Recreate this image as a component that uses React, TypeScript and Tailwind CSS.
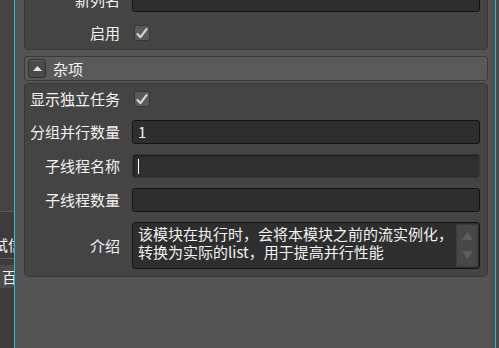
import type { ReactNode } from "react";

const font = "font-['Noto_Sans_CJK_SC','Noto_Sans',sans-serif]";

function Check() {
  return (
    <div className="ml-[2px] flex h-[16px] w-[16px] items-center justify-center rounded-[2px] border border-[#383838] bg-[#595959]">
      <svg width="12" height="11" viewBox="0 0 12 11">
        <path d="M1.5 6 L4.5 9.2 L10.5 1.2" fill="none" stroke="#d4d4d4" strokeWidth="2.2" strokeLinecap="round" strokeLinejoin="round" />
      </svg>
    </div>
  );
}

function Row({ label, children, className = "" }: { label: string; children: ReactNode; className?: string }) {
  return (
    <div className={`flex items-center ${className}`}>
      <div className="w-[95px] shrink-0 text-right leading-[18px]">{label}</div>
      <div className="ml-[12px] flex flex-1 items-center">{children}</div>
    </div>
  );
}

function Field({ value, focused }: { value?: string; focused?: boolean }) {
  return (
    <div
      className={
        focused
          ? "flex h-[24px] flex-1 items-center rounded-[3px] border border-[#363636] bg-[#303030] pl-[5px] shadow-[inset_1px_1px_2px_rgba(0,0,0,0.5)]"
          : "flex h-[24px] flex-1 items-center rounded-[3px] border border-[#141414] bg-[#2e2e2e] pl-[5px]"
      }
    >
      {focused && <div className="h-[15px] w-px bg-white" />}
      {value && <span className="leading-[18px]">{value}</span>}
    </div>
  );
}

export default function App() {
  return (
    <div className={`flex h-[348px] w-[499px] overflow-hidden bg-[#545454] text-[15px] text-[#f2f2f2] ${font}`}>
      {/* left neighbour pane */}
      <div className="flex w-[14px] shrink-0 flex-col overflow-hidden whitespace-nowrap bg-[#3c3c3c]">
        <div className="h-[211px] shrink-0 bg-[#444444]" />
        <div className="h-px shrink-0 bg-[#5a5a5a]" />
        <div className="flex h-[46px] shrink-0 items-end pb-[4px]">
          <span className="-ml-[22px] leading-[18px]">测试信息</span>
        </div>
        <div className="h-px shrink-0 bg-[#5c5c5c]" />
        <div className="h-[6px] shrink-0" />
        <div className="flex h-[23px] shrink-0 items-center bg-[#4b4b4b] pl-[2px]">
          <span className="leading-[18px]">百分</span>
        </div>
      </div>
      <div className="w-px shrink-0 bg-[#3cb2d2]" />

      {/* property grid */}
      <div className="flex w-[480px] shrink-0">
        <div className="-mt-[16px] ml-[9px] w-[464px] shrink-0">
          <div className="rounded-b-[4px] border border-[#383838] bg-[#444444] pb-[4px] pr-[7px] pt-[3px]">
            <Row label="新列名">
              <Field />
            </Row>
            <Row label="启用" className="mt-[9px] h-[24px]">
              <Check />
            </Row>
          </div>

          <div className="mt-[6px] flex h-[25px] items-center rounded-[3px] border border-[#3a3a3a] bg-[#595959] pl-[3px]">
            <div className="flex h-[19px] w-[18px] items-center justify-center rounded-[3px] border border-[#303030] bg-[#4a4a4a] shadow-[inset_0_1px_0_rgba(255,255,255,0.12)]">
              <svg width="9" height="5" viewBox="0 0 9 5">
                <path d="M0 5 L4.5 0 L9 5 Z" fill="#e6e6e6" />
              </svg>
            </div>
            <span className="ml-[7px] leading-[18px]">杂项</span>
          </div>

          <div className="mt-[2px] rounded-[4px] border border-[#383838] bg-[#444444] pb-[7px] pr-[7px] pt-[3px]">
            <Row label="显示独立任务" className="h-[24px]">
              <Check />
            </Row>
            <Row label="分组并行数量" className="mt-[9px]">
              <Field value="1" />
            </Row>
            <Row label="子线程名称" className="mt-[10px]">
              <Field focused />
            </Row>
            <Row label="子线程数量" className="mt-[10px]">
              <Field />
            </Row>
            <Row label="介绍" className="mt-[10px]">
              <div className="flex h-[47px] flex-1 rounded-[3px] border border-[#141414] bg-[#2e2e2e]">
                <div className="flex-1 pl-[5px] pt-[2px] leading-[18px]">
                  <div>该模块在执行时，会将本模块之前的流实例化，</div>
                  <div>转换为实际的list，用于提高并行性能</div>
                </div>
                <div className="my-[1px] mr-px flex w-[22px] flex-col items-center justify-between border border-[#3c3c3c] bg-[#474747] py-[7px]">
                  <svg width="11" height="8" viewBox="0 0 11 8">
                    <path d="M0 8 L5.5 0 L11 8 Z" fill="#5e5e5e" />
                  </svg>
                  <svg width="11" height="8" viewBox="0 0 11 8">
                    <path d="M0 0 L5.5 8 L11 0 Z" fill="#5e5e5e" />
                  </svg>
                </div>
              </div>
            </Row>
          </div>
        </div>
        <div className="ml-auto w-[2px] shrink-0 bg-[#4d4d4d]" />
        <div className="w-[1px] shrink-0" />
      </div>
      <div className="w-px shrink-0 bg-[#3cb2d2]" />
      <div className="flex-1 bg-[#4a4a4a]" />
    </div>
  );
}
